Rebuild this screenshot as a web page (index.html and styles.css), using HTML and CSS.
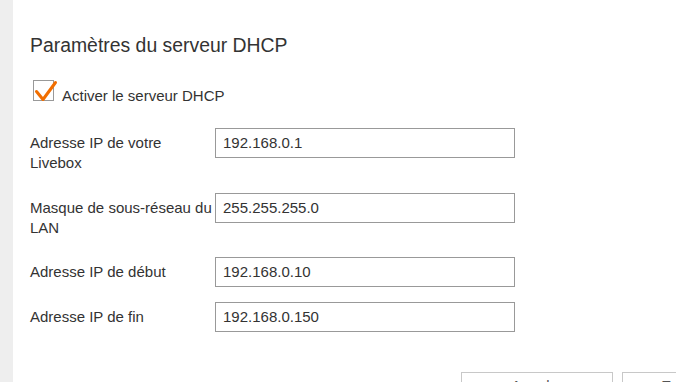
FILE: index.html
```html
<!DOCTYPE html>
<html lang="fr">
<head>
<meta charset="utf-8">
<title>Paramètres du serveur DHCP</title>
<link rel="stylesheet" href="styles.css">
</head>
<body>
<div class="page">
  <aside class="side"></aside>
  <main class="content">
    <h2 class="title">Paramètres du serveur DHCP</h2>
    <label class="check-row">
      <span class="check-box">
        <svg class="check-mark" width="26" height="24" viewBox="0 0 26 24" aria-hidden="true">
          <path d="M2.5 11.5 L9 19.5 L21.5 2.5" fill="none" stroke="#f16e00" stroke-width="3" stroke-linecap="round" stroke-linejoin="round"/>
        </svg>
      </span>
      <span class="check-text">Activer le serveur DHCP</span>
    </label>
    <div class="form">
      <div class="row">
        <div class="label">Adresse IP de votre Livebox</div>
        <div class="field">192.168.0.1</div>
      </div>
      <div class="row">
        <div class="label">Masque de sous-réseau du LAN</div>
        <div class="field">255.255.255.0</div>
      </div>
      <div class="row">
        <div class="label">Adresse IP de début</div>
        <div class="field">192.168.0.10</div>
      </div>
      <div class="row">
        <div class="label">Adresse IP de fin</div>
        <div class="field">192.168.0.150</div>
      </div>
    </div>
    <div class="actions">
      <button class="btn">Annuler</button>
      <button class="btn">Enregistrer</button>
    </div>
  </main>
</div>
</body>
</html>
```

FILE: styles.css
```css
html, body {
  margin: 0;
  padding: 0;
  background: #ffffff;
  overflow: hidden;
}

body {
  font-family: "Liberation Sans", Arial, Helvetica, sans-serif;
  color: #333333;
}

.page {
  display: flex;
  min-height: 382px;
}

.side {
  flex: 0 0 13px;
  background: #eeeeee;
}

.content {
  flex: 1 1 auto;
  padding: 33px 0 0 17px;
}

.title {
  margin: 0;
  font-size: 19.4px;
  line-height: 24px;
  font-weight: normal;
  color: #333333;
}

.check-row {
  display: flex;
  align-items: flex-start;
  margin-top: 23px;
  padding-left: 3px;
}

.check-box {
  position: relative;
  width: 21px;
  height: 21px;
  box-sizing: border-box;
  border: 1px solid #999999;
  background: #ffffff;
  flex: 0 0 auto;
}

.check-mark {
  position: absolute;
  left: 0;
  top: -1px;
}

.check-text {
  margin-left: 8px;
  padding-top: 6px;
  font-size: 15px;
  line-height: 20px;
  color: #333333;
}

.form {
  margin-top: 22px;
  display: flex;
  flex-direction: column;
  gap: 14.5px;
}

.row {
  display: grid;
  grid-template-columns: 185px 300px;
  align-items: start;
}

.label {
  padding: 5px 0 5px;
  font-size: 15px;
  line-height: 20px;
  color: #333333;
}

.field {
  box-sizing: border-box;
  height: 30px;
  border: 1px solid #999999;
  padding: 0 7px;
  font-size: 15px;
  line-height: 28px;
  color: #333333;
  background: #ffffff;
}

.actions {
  display: flex;
  align-items: flex-start;
  gap: 9px;
  margin-top: 40px;
  margin-left: 431px;
}

.btn {
  flex: 0 0 auto;
  width: 152px;
  box-sizing: border-box;
  border: 1px solid #c8c8c8;
  background: #ffffff;
  padding: 4px 0 8px;
  font-family: "Liberation Sans", Arial, sans-serif;
  font-size: 15px;
  line-height: 18px;
  color: #555555;
  text-align: center;
}
```
